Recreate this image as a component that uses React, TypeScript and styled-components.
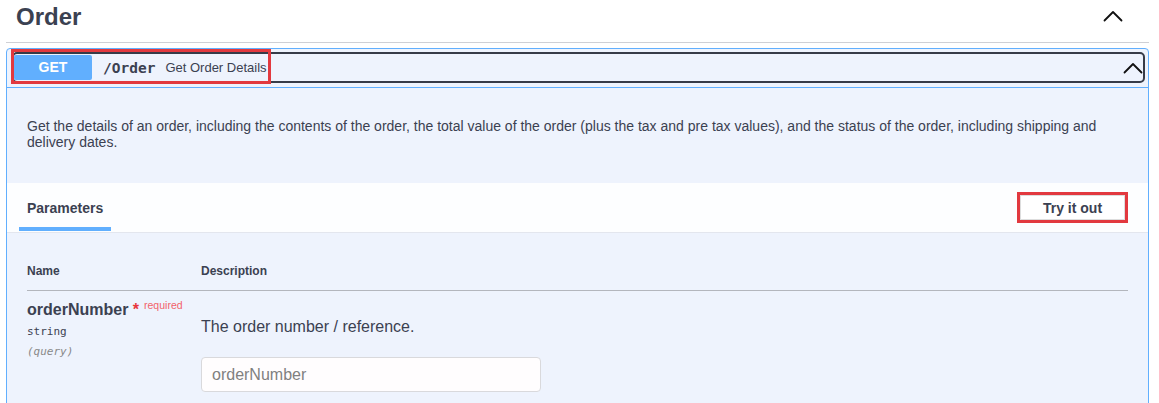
import React from "react";
import styled, { createGlobalStyle } from "styled-components";

const GlobalStyle = createGlobalStyle`
  html, body { margin: 0; padding: 0; background: #ffffff; }
  body {
    font-family: "Liberation Sans", Arial, sans-serif;
    color: #3b4151;
  }
  * { box-sizing: border-box; }
`;

const Page = styled.div`
  width: 1159px;
  height: 403px;
  overflow: hidden;
`;

const TagHeader = styled.div`
  display: flex;
  align-items: flex-start;
  justify-content: space-between;
  height: 43px;
  margin: 0 10px 0 6px;
  padding: 3px 26px 0 10px;
  border-bottom: 1px solid #cfd0d5;
`;

const TagTitle = styled.h3`
  margin: 0;
  font-size: 24px;
  line-height: 28px;
  font-weight: 700;
  color: #3b4151;
`;

const Chevron = styled.svg<{ $top: number }>`
  display: block;
  flex: none;
  width: 20px;
  height: 12px;
  margin-top: ${(p) => p.$top}px;
`;

const OpBlock = styled.div`
  margin: 5px 10px 0 6px;
  border: 1px solid #61affe;
  border-radius: 4px;
  background: #eef3fd;
`;

const Summary = styled.div`
  position: relative;
  padding: 3px 3px 4px 5px;
  border-bottom: 1px solid #61affe;
`;

const SummaryControl = styled.div`
  display: flex;
  align-items: center;
  height: 31px;
  border: 2px solid #363b48;
  border-radius: 5px;
  padding: 0;
`;

const MethodBadge = styled.span`
  flex: none;
  width: 78px;
  height: 25px;
  line-height: 25px;
  border-radius: 2px;
  background: #61affe;
  color: #ffffff;
  font-size: 14px;
  font-weight: 700;
  text-align: center;
`;

const PathText = styled.span`
  margin-left: 11px;
  font-family: "DejaVu Sans Mono", monospace;
  font-weight: 700;
  font-size: 14.5px;
  color: #3b4151;
`;

const SummaryText = styled.span`
  flex: 1;
  margin-left: 10px;
  font-size: 13px;
  color: #3b4151;
`;

const Highlight = styled.div<{ $left: number; $top: number; $w: number; $h: number }>`
  position: absolute;
  left: ${(p) => p.$left}px;
  top: ${(p) => p.$top}px;
  width: ${(p) => p.$w}px;
  height: ${(p) => p.$h}px;
  border: 3px solid #e2393f;
  pointer-events: none;
`;

const Description = styled.div`
  padding: 30px 20px 33px;
  p {
    margin: 0;
    font-size: 14px;
    line-height: 16px;
    color: #3b4151;
  }
`;

const SectionBar = styled.div`
  display: flex;
  align-items: center;
  justify-content: space-between;
  height: 50px;
  padding: 0 20px 0 12px;
  background: rgba(255, 255, 255, 0.88);
  border-bottom: 1px solid #e3e6ee;
`;

const Tab = styled.div`
  align-self: flex-start;
  height: 48px;
  padding: 17px 8px 0;
  border-bottom: 4px solid #61affe;
  font-size: 14px;
  line-height: 17px;
  font-weight: 700;
  color: #3b4151;
`;

const TryButton = styled.button`
  width: 105px;
  height: 25px;
  margin-right: 3px;
  padding: 0;
  background: #ffffff;
  border: 1px solid #dddddd;
  outline: 3px solid #e2393f;
  font-family: "Liberation Sans", Arial, sans-serif;
  font-size: 14px;
  font-weight: 700;
  color: #3b4151;
`;

const TableWrap = styled.div`
  padding: 19px 20px 40px;
`;

const Row = styled.div<{ $head?: boolean }>`
  display: grid;
  grid-template-columns: 174px 1fr;
  border-bottom: ${(p) => (p.$head ? "1px solid #b3b6bd" : "none")};
`;

const HeadCell = styled.div`
  padding: 12px 0;
  font-size: 12px;
  line-height: 14px;
  font-weight: 700;
  color: #3b4151;
`;

const NameCell = styled.div`
  padding-top: 10px;
`;

const ParamName = styled.div`
  font-size: 16px;
  line-height: 18px;
  font-weight: 700;
  color: #3b4151;
  white-space: nowrap;
`;

const Star = styled.span`
  color: #e8363c;
`;

const RequiredTag = styled.span`
  position: relative;
  top: -6px;
  padding-left: 5px;
  font-size: 10.5px;
  font-weight: 400;
  color: #f2626a;
`;

const ParamType = styled.div`
  padding: 5px 0 7px;
  font-family: "DejaVu Sans Mono", monospace;
  font-size: 11px;
  line-height: 13px;
  color: #3b4151;
`;

const ParamIn = styled.div`
  font-family: "DejaVu Sans Mono", monospace;
  font-size: 11px;
  line-height: 13px;
  font-style: italic;
  color: #888888;
`;

const DescCell = styled.div`
  padding-top: 26px;
  p {
    margin: 0 0 21px;
    font-size: 16px;
    line-height: 19px;
    color: #3b4151;
  }
`;

const TextInput = styled.input`
  display: block;
  width: 340px;
  height: 35px;
  padding: 0 10px;
  border: 1px solid #d9d9dc;
  border-radius: 4px;
  background: #fffdfe;
  font-family: "Liberation Sans", Arial, sans-serif;
  font-size: 16px;
  color: #3b4151;
  &::placeholder { color: #808080; }
`;

const UpArrow = ({ top }: { top: number }) => (
  <Chevron $top={top} viewBox="0 0 20 12" aria-hidden>
    <path d="M1.5 10.5 L10 2 L18.5 10.5" fill="none" stroke="#111" strokeWidth="1.8" strokeLinecap="round" strokeLinejoin="round" />
  </Chevron>
);

export default function App() {
  return (
    <Page>
      <GlobalStyle />
      <TagHeader>
        <TagTitle>Order</TagTitle>
        <UpArrow top={7} />
      </TagHeader>
      <OpBlock>
        <Summary>
          <SummaryControl>
            <MethodBadge>GET</MethodBadge>
            <PathText>/Order</PathText>
            <SummaryText>Get Order Details</SummaryText>
            <UpArrow top={0} />
          </SummaryControl>
          <Highlight $left={4} $top={0} $w={260} $h={35} />
        </Summary>
        <Description>
          <p>
            Get the details of an order, including the contents of the order, the total value of the order (plus the tax and pre tax values), and the status of the order, including shipping and delivery dates.
          </p>
        </Description>
        <SectionBar>
          <Tab>Parameters</Tab>
          <TryButton>Try it out</TryButton>
        </SectionBar>
        <TableWrap>
          <Row $head>
            <HeadCell>Name</HeadCell>
            <HeadCell>Description</HeadCell>
          </Row>
          <Row>
            <NameCell>
              <ParamName>
                orderNumber<Star>&nbsp;*</Star>
                <RequiredTag>required</RequiredTag>
              </ParamName>
              <ParamType>string</ParamType>
              <ParamIn>(query)</ParamIn>
            </NameCell>
            <DescCell>
              <p>The order number / reference.</p>
              <TextInput placeholder="orderNumber" />
            </DescCell>
          </Row>
        </TableWrap>
      </OpBlock>
    </Page>
  );
}
